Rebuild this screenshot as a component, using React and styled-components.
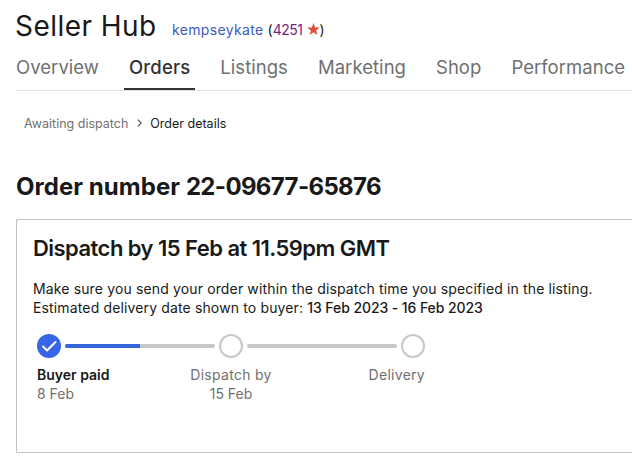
import React from 'react'
import styled, { createGlobalStyle } from 'styled-components'

const GlobalStyle = createGlobalStyle`
  * {
    box-sizing: border-box;
  }
  body {
    margin: 0;
    background: #fff;
    color: #191919;
    font-family: Inter, "Liberation Sans", sans-serif;
    overflow: hidden;
  }
  a {
    text-decoration: none;
  }
`

const StyledPage = styled.div`
  height: 461px;
  padding-left: 16px;
  overflow: hidden;
  white-space: nowrap;
`

const StyledHeader = styled.header`
  display: flex;
  height: 50px;
  padding-top: 6px;
`

const StyledBrand = styled.div`
  width: 156px;
  margin-left: -1px;
  font-size: 28px;
  line-height: 40px;
  letter-spacing: 0.45px;
`

const StyledUser = styled.div`
  display: flex;
  align-items: center;
  height: 20px;
  margin: 13px 0 0 1px;
  font-size: 14px;
`

const StyledUserLink = styled.a`
  color: #3c5cba;
  margin-right: 4px;
  letter-spacing: 0.35px;
`

const StyledScore = styled.a`
  color: #7a2379;
  margin-right: 4px;
  letter-spacing: -0.5px;
`

const StyledStar = styled.svg`
  width: 13px;
  height: 12px;
`

const StyledNav = styled.nav`
  display: flex;
  gap: 20px;
  height: 41px;
  border-bottom: 1px solid #e2e2e2;
`

const StyledTab = styled.a`
  flex: none;
  height: 40px;
  padding: 0 5px;
  font-size: 18.5px;
  line-height: 34px;
  letter-spacing: ${({ $active }) => ($active ? 0.15 : 0.04)}px;
  color: ${({ $active }) => ($active ? '#333' : '#707070')};
  font-weight: ${({ $active }) => ($active ? 500 : 400)};
  border-bottom: 2px solid ${({ $active }) => ($active ? '#333' : 'transparent')};

  &:first-child {
    padding-left: 0;
  }
`

const StyledBreadcrumbs = styled.div`
  display: flex;
  align-items: center;
  height: 20px;
  margin: 22px 0 0 8px;
  font-size: 12.5px;
  color: #191919;
  a {
    color: #707070;
  }
  svg {
    width: 5px;
    height: 8px;
    margin: 0 8px 0 9px;
  }
`

const StyledTitle = styled.h1`
  margin: 38px 0 0;
  font-size: 24px;
  line-height: 32px;
  font-weight: 700;
  letter-spacing: 0.05px;
  span {
    letter-spacing: -0.65px;
  }
`

const StyledCard = styled.section`
  height: 234px;
  margin-top: 16px;
  padding: 14px 16px;
  border: 1px solid #c1c1c1;
  border-right: 0;
  border-radius: 2px 0 0 2px;
`

const StyledCardTitle = styled.h2`
  margin: 0;
  font-size: 22px;
  line-height: 28px;
  font-weight: 600;
  letter-spacing: -0.54px;
`

const StyledText = styled.p`
  margin: 0;
  font-size: 14px;
  line-height: 19px;
  letter-spacing: 0.14px;
  b {
    font-weight: 500;
    letter-spacing: -0.08px;
  }
`

const StyledDescription = styled.div`
  margin-top: 17px;
`

const StyledStepper = styled.div`
  display: flex;
  align-items: center;
  gap: 4px;
  margin: 17px 0 0 4px;
`

const StyledStep = styled.svg`
  flex: none;
  width: 24px;
  height: 24px;
`

const StyledTrack = styled.div`
  width: 150px;
  height: 4px;
  border-radius: 2px;
  background: #c7c7c7;
  overflow: hidden;
`

const StyledProgress = styled.div`
  width: 50%;
  height: 100%;
  background: #3665d9;
`

const StyledLabels = styled.div`
  display: grid;
  grid-template-columns: 114px 160px 114px;
  width: 388px;
  margin: 7px 0 0 4px;
`

const StyledLabel = styled.div`
  text-align: ${({ $align }) => $align || 'left'};
  font-size: 14px;
  line-height: 19px;
  color: #707070;
  strong {
    display: block;
    font-weight: ${({ $done }) => ($done ? 600 : 400)};
    letter-spacing: ${({ $done }) => ($done ? 0 : 0.28)}px;
    color: ${({ $done }) => ($done ? '#191919' : 'inherit')};
  }
`

const tabs = [
  { name: 'Overview' },
  { name: 'Orders', active: true },
  { name: 'Listings' },
  { name: 'Marketing' },
  { name: 'Shop' },
  { name: 'Performance' },
]

function Step({ done }) {
  return (
    <StyledStep viewBox="0 0 24 24" fill="none">
      {done ? (
        <>
          <circle cx="12" cy="12" r="12" fill="#3665e8" />
          <path d="M6 12.5l4 4 8.5-8.5" stroke="#fff" strokeWidth="2" strokeLinecap="round" strokeLinejoin="round" />
        </>
      ) : (
        <circle cx="12" cy="12" r="11" stroke="#c7c7c7" strokeWidth="2" />
      )}
    </StyledStep>
  )
}

export default function App() {
  return (
    <StyledPage>
      <GlobalStyle />
      <StyledHeader>
        <StyledBrand>Seller Hub</StyledBrand>
        <StyledUser>
          <StyledUserLink>kempseykate</StyledUserLink>
          <span>(</span>
          <StyledScore>4251</StyledScore>
          <StyledStar viewBox="0 0 13 12">
            <path d="M6.5 0l1.6 4.4 4.7.1-3.7 2.9 1.3 4.6-3.9-2.7L2.6 12l1.3-4.6L.2 4.5l4.7-.1z" fill="#dd4f3a" />
          </StyledStar>
          <span>)</span>
        </StyledUser>
      </StyledHeader>
      <StyledNav>
        {tabs.map(tab => (
          <StyledTab key={tab.name} $active={tab.active}>{tab.name}</StyledTab>
        ))}
      </StyledNav>
      <StyledBreadcrumbs>
        <a>Awaiting dispatch</a>
        <svg viewBox="0 0 5 8" fill="none">
          <path d="M.8.6L4.2 4 .8 7.4" stroke="#555" strokeWidth="1.2" />
        </svg>
        <span>Order details</span>
      </StyledBreadcrumbs>
      <StyledTitle>Order number <span>22-09677-65876</span></StyledTitle>
      <StyledCard>
        <StyledCardTitle>Dispatch by 15 Feb at 11.59pm GMT</StyledCardTitle>
        <StyledDescription>
          <StyledText>Make sure you send your order within the dispatch time you specified in the listing.</StyledText>
          <StyledText>
            Estimated delivery date shown to buyer: <b>13 Feb 2023 - 16 Feb 2023</b>
          </StyledText>
        </StyledDescription>
        <StyledStepper>
          <Step done />
          <StyledTrack>
            <StyledProgress />
          </StyledTrack>
          <Step />
          <StyledTrack />
          <Step />
        </StyledStepper>
        <StyledLabels>
          <StyledLabel $done>
            <strong>Buyer paid</strong>
            8 Feb
          </StyledLabel>
          <StyledLabel $align="center">
            <strong>Dispatch by</strong>
            15 Feb
          </StyledLabel>
          <StyledLabel $align="right">
            <strong>Delivery</strong>
          </StyledLabel>
        </StyledLabels>
      </StyledCard>
    </StyledPage>
  )
}
